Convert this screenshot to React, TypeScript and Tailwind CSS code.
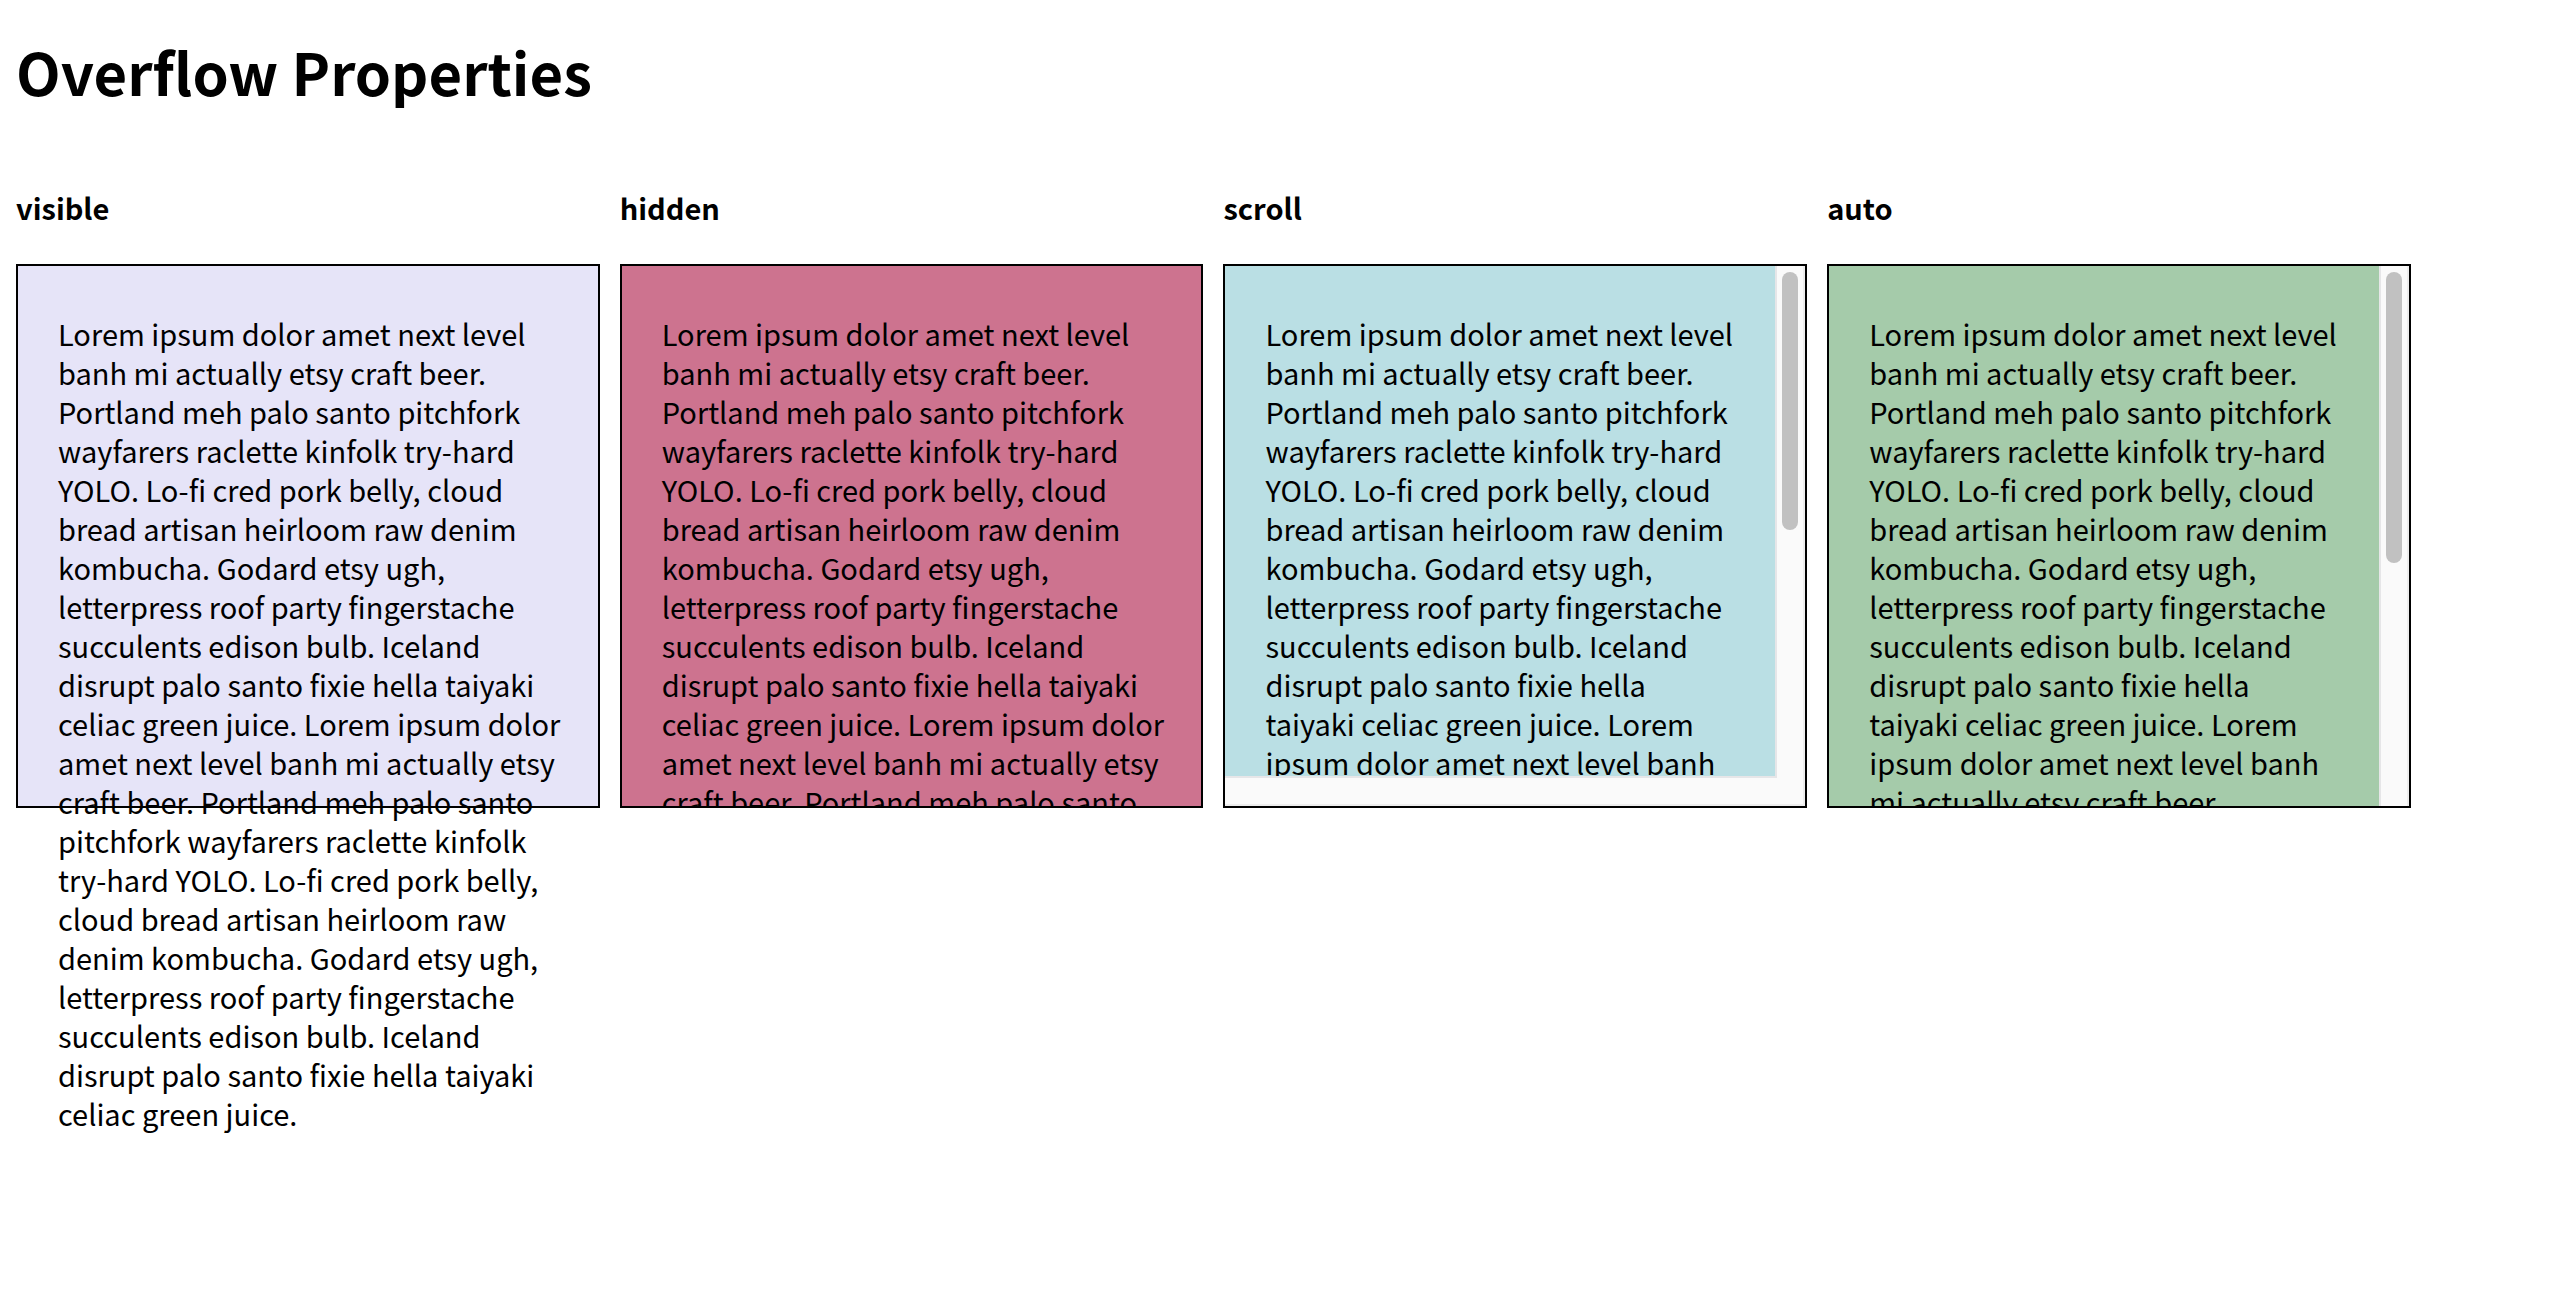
import type { ReactNode } from "react";

const wideLines = [
  "Lorem ipsum dolor amet next level",
  "banh mi actually etsy craft beer.",
  "Portland meh palo santo pitchfork",
  "wayfarers raclette kinfolk try-hard",
  "YOLO. Lo-fi cred pork belly, cloud",
  "bread artisan heirloom raw denim",
  "kombucha. Godard etsy ugh,",
  "letterpress roof party fingerstache",
  "succulents edison bulb. Iceland",
  "disrupt palo santo fixie hella taiyaki",
  "celiac green juice. Lorem ipsum dolor",
  "amet next level banh mi actually etsy",
  "craft beer. Portland meh palo santo",
  "pitchfork wayfarers raclette kinfolk",
  "try-hard YOLO. Lo-fi cred pork belly,",
  "cloud bread artisan heirloom raw",
  "denim kombucha. Godard etsy ugh,",
  "letterpress roof party fingerstache",
  "succulents edison bulb. Iceland",
  "disrupt palo santo fixie hella taiyaki",
  "celiac green juice.",
];

const narrowLines = [
  ...wideLines.slice(0, 9),
  "disrupt palo santo fixie hella",
  "taiyaki celiac green juice. Lorem",
  "ipsum dolor amet next level banh",
  "mi actually etsy craft beer.",
];

function Copy({ lines }: { lines: string[] }) {
  return (
    <p className="whitespace-pre px-10 pt-12 text-[29px] leading-[39px]">
      {lines.join("\n")}
    </p>
  );
}

function Demo({ name, children }: { name: string; children: ReactNode }) {
  return (
    <section className="w-[23%]">
      <h2 className="mb-[37px] text-[29px] leading-[39px] font-bold">{name}</h2>
      {children}
    </section>
  );
}

function Track({ children }: { children?: ReactNode }) {
  return (
    <div className="flex flex-col items-center border-r-2 border-[#ededed] bg-[#fafafa] pt-1.5">
      {children}
    </div>
  );
}

export default function App() {
  return (
    <main className="min-h-screen bg-white px-4 pt-8 font-['Noto_Sans_CJK_KR',sans-serif] text-black">
      <h1 className="mb-[78px] text-[58px] leading-[78px] font-bold">
        Overflow Properties
      </h1>
      <div className="flex items-start gap-5">
        <Demo name="visible">
          <div className="h-[544px] border-2 border-black bg-[#e6e4f8]">
            <Copy lines={wideLines} />
          </div>
        </Demo>
        <Demo name="hidden">
          <div className="h-[544px] overflow-hidden border-2 border-black bg-[#cd738f]">
            <Copy lines={wideLines} />
          </div>
        </Demo>
        <Demo name="scroll">
          <div className="grid h-[544px] grid-cols-[minmax(0,1fr)_28px] grid-rows-[minmax(0,1fr)_28px] border-2 border-black">
            <div className="overflow-hidden border-r-2 border-b-2 border-[#e6e6e8] bg-[#badfe4]">
              <Copy lines={narrowLines} />
            </div>
            <Track>
              <div className="h-[258px] w-4 rounded-full bg-[#c1c1c1]" />
            </Track>
            <div className="border-b-2 border-[#ededed] bg-[#fafafa]" />
            <div className="border-r-2 border-b-2 border-[#ededed] bg-[#fafafa]" />
          </div>
        </Demo>
        <Demo name="auto">
          <div className="grid h-[544px] grid-cols-[minmax(0,1fr)_28px] grid-rows-[minmax(0,1fr)] border-2 border-black">
            <div className="overflow-hidden border-r-2 border-[#e6e6e8] bg-[#a5cbaa]">
              <Copy lines={narrowLines} />
            </div>
            <Track>
              <div className="h-[291px] w-4 rounded-full bg-[#c1c1c1]" />
            </Track>
          </div>
        </Demo>
      </div>
    </main>
  );
}
